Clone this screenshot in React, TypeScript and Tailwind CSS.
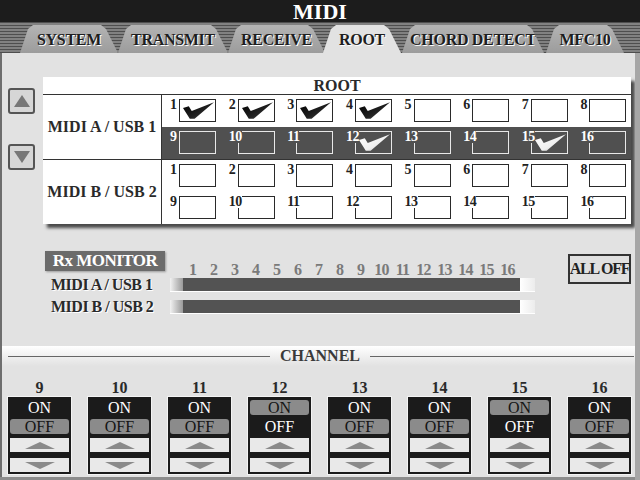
import React from 'react'

const tabs = [
  { label: 'SYSTEM', cls: 'w-[98px]' },
  { label: 'TRANSMIT', cls: 'w-[110px]' },
  { label: 'RECEIVE', cls: 'w-[97px]' },
  { label: 'ROOT', cls: 'w-[78px] ml-[-2px]', active: true },
  { label: 'CHORD DETECT', cls: 'w-[142px] ml-[1px]' },
  { label: 'MFC10', cls: 'w-[78px] ml-[2px]' },
]

const checkedA = [1, 2, 3, 4, 12, 15]
const channels = [9, 10, 11, 12, 13, 14, 15, 16]
const onChannels = [12, 15]

function Check({ light }: { light?: boolean }) {
  return (
    <svg viewBox="0 0 32 17" className="absolute left-[3px] top-[2px] w-[31px] h-[17px]">
      <defs>
        <linearGradient id={light ? 'cl' : 'cd'} x1="0" y1="0" x2="1" y2="1">
          <stop offset="0" stopColor={light ? '#ffffff' : '#000000'} />
          <stop offset="0.6" stopColor={light ? '#f0f0f0' : '#222222'} />
          <stop offset="1" stopColor={light ? '#a8a8a8' : '#666666'} />
        </linearGradient>
      </defs>
      <polygon points="0,6 6,4 9,9 32,0 12,17 7,17" fill={`url(#${light ? 'cl' : 'cd'})`} />
    </svg>
  )
}

function CellRow({ start, dark, checked }: { start: number; dark?: boolean; checked: number[] }) {
  return (
    <div className={`h-[32px] grid grid-cols-8 ${dark ? 'bg-[#505050]' : 'bg-white'}`}>
      {Array.from({ length: 8 }, (_, i) => start + i).map((n) => (
        <div key={n} className="relative pt-[4px] pl-[17px]">
          <span
            className={`absolute left-[8px] top-[3px] z-10 text-[14px] leading-[13px] font-bold tracking-[-0.5px] ${
              dark ? 'bg-[#505050] text-white' : 'bg-white text-[#222]'
            }`}
          >
            {n}
          </span>
          <div className={`relative w-[37px] h-[23px] border ${dark ? 'border-[#e8e8e8]' : 'border-[#2a2a2a]'}`}>
            {checked.includes(n) && <Check light={dark} />}
          </div>
        </div>
      ))}
    </div>
  )
}

function ArrowButton({ down }: { down?: boolean }) {
  return (
    <div className="w-[27px] h-[26px] rounded-[3px] border-2 border-[#555] bg-[#d6d6d6] flex items-center justify-center">
      <svg viewBox="0 0 16 14" className="w-[16px] h-[14px]">
        <polygon points={down ? '0,1 16,1 8,13' : '8,1 16,13 0,13'} fill="#777" />
      </svg>
    </div>
  )
}

function Bar() {
  return (
    <div className="flex h-[14px] border-b border-white">
      <div className="w-[13px] bg-gradient-to-r from-[#f2f2f2] to-[#9a9a9a]" />
      <div className="flex-1 bg-[#535353]" />
      <div className="w-[15px] bg-gradient-to-r from-white to-[#ececec]" />
    </div>
  )
}

function Strip({ n }: { n: number }) {
  const on = onChannels.includes(n)
  return (
    <div className="flex flex-col items-center w-[63px]">
      <div className="h-[18px] text-[16px] leading-[18px] font-bold text-[#2a2a2a]">{n}</div>
      <div className="w-[63px] h-[77px] bg-[#1b1b1b] ring-1 ring-[#f4f4f4] flex flex-col px-[2px] pt-[3px]">
        <div
          className={`h-[15px] rounded-[3px] flex items-center justify-center text-[16px] leading-none ${
            on ? 'bg-[#8b8b8b] text-[#151515]' : 'text-white'
          }`}
        >
          ON
        </div>
        <div
          className={`mt-[4px] h-[15px] rounded-[3px] flex items-center justify-center text-[16px] leading-none ${
            on ? 'text-white' : 'bg-[#8b8b8b] text-[#151515]'
          }`}
        >
          OFF
        </div>
        <div className="mt-[4px] h-[14px] bg-[#e9e9e9] flex items-center justify-center">
          <svg viewBox="0 0 30 7" className="w-[30px] h-[7px]">
            <polygon points="15,0 30,7 0,7" fill="#8a8a8a" />
          </svg>
        </div>
        <div className="mt-[6px] h-[14px] bg-[#e9e9e9] flex items-center justify-center">
          <svg viewBox="0 0 30 7" className="w-[30px] h-[7px]">
            <polygon points="0,0 30,0 15,7" fill="#8a8a8a" />
          </svg>
        </div>
      </div>
    </div>
  )
}

export default function App() {
  return (
    <div className="w-[640px] h-[480px] overflow-hidden flex flex-col bg-[#8c8c8c] font-['Liberation_Serif','Times_New_Roman',serif]">
      <div className="h-[22px] bg-[#1c1c1c] flex items-center justify-center pt-[1px] text-white text-[22px] leading-[20px] font-bold">
        MIDI
      </div>

      <div className="h-[31px] flex items-end pl-[20px] bg-[repeating-linear-gradient(180deg,#4e4e4e_0px,#4e4e4e_1px,#818181_1px,#818181_3px)]">
        {tabs.map((t) => (
          <div
            key={t.label}
            className={`${t.cls} relative h-[28px] flex items-center justify-center pt-[2px] text-[16px] font-bold text-[#1e1e1e] tracking-[-0.3px] [text-shadow:1px_1px_0_#fff] [clip-path:polygon(0_100%,8px_4px,13px_0,calc(100%_-_17px)_0,calc(100%_-_12px)_4px,100%_100%)] ${
              t.active ? 'bg-[#e2e2e2] z-10' : 'bg-gradient-to-b from-[#b4b4b4] to-[#9c9c9c]'
            }`}
          >
            {t.label}
          </div>
        ))}
      </div>

      <div className="flex-1 flex">
        <div className="w-[635px] h-[424px] bg-[#e2e2e2] border-l-2 border-[#6e6e6e] flex flex-col">
          {/* ROOT table */}
          <div className="flex mt-[24px]">
            <div className="w-[41px] pl-[6px] flex flex-col">
              <div className="mt-[11px]">
                <ArrowButton />
              </div>
              <div className="mt-[30px]">
                <ArrowButton down />
              </div>
            </div>
            <div className="w-[588px] h-[147px] bg-white shadow-[4px_4px_3px_#4a4a4a] flex flex-col text-[#2a2a2a]">
              <div className="h-[18px] border-b border-[#333] text-center text-[16px] leading-[17px] font-bold">ROOT</div>
              <div className="flex h-[65px] border-b border-[#333]">
                <div className="w-[119px] border-r border-[#333] flex items-center justify-center text-[16px] font-bold">
                  MIDI A / USB 1
                </div>
                <div className="flex-1 flex flex-col">
                  <CellRow start={1} checked={checkedA} />
                  <CellRow start={9} dark checked={checkedA} />
                </div>
              </div>
              <div className="flex h-[64px]">
                <div className="w-[119px] border-r border-[#333] flex items-center justify-center text-[16px] font-bold">
                  MIDI B / USB 2
                </div>
                <div className="flex-1 flex flex-col">
                  <CellRow start={1} checked={[]} />
                  <CellRow start={9} checked={[]} />
                </div>
              </div>
            </div>
          </div>

          {/* Rx monitor */}
          <div className="flex mt-[27px] pl-[43px]">
            <div className="w-[125px] flex flex-col">
              <div className="w-[120px] h-[20px] bg-[#6b6b6b] shadow-[1px_1px_2px_#999] text-white text-[17px] leading-[20px] font-bold text-center tracking-[-0.5px]">
                Rx MONITOR
              </div>
              <div className="mt-[3px] h-[22px] pl-[6px] leading-[22px] text-[16px] font-bold text-[#2a2a2a] tracking-[-0.5px] [text-shadow:1px_1px_0_#fff]">
                MIDI A / USB 1
              </div>
              <div className="h-[22px] pl-[6px] leading-[22px] text-[16px] font-bold text-[#2a2a2a] tracking-[-0.5px] [text-shadow:1px_1px_0_#fff]">
                MIDI B / USB 2
              </div>
            </div>
            <div className="w-[365px] flex flex-col">
              <div className="h-[27px] flex items-end pl-[12px] pb-[1px]">
                {Array.from({ length: 16 }, (_, i) => i + 1).map((n) => (
                  <span key={n} className="w-[21px] text-center text-[16px] leading-[14px] font-bold text-[#7a7a7a] tracking-[-0.8px]">
                    {n}
                  </span>
                ))}
              </div>
              <Bar />
              <div className="mt-[8px]">
                <Bar />
              </div>
            </div>
            <div className="ml-[33px] mt-[3px] w-[63px] h-[30px] border-2 border-[#333] bg-[#e0e0e0] flex items-center justify-center text-[16px] font-bold tracking-[-1.2px] text-[#222] whitespace-nowrap">
              ALL OFF
            </div>
          </div>

          {/* CHANNEL heading */}
          <div className="mt-[28px] h-[20px] bg-gradient-to-b from-white to-[#e2e2e2] flex items-center pl-[6px] pr-[1px]">
            <div className="w-[262px] h-px bg-[#666]" />
            <div className="px-[10px] text-[16px] leading-none font-bold text-[#3a3a3a]">CHANNEL</div>
            <div className="flex-1 h-px bg-[#666]" />
          </div>

          <div className="mt-[13px] flex pl-[6px] gap-[17px]">
            {channels.map((n) => (
              <Strip key={n} n={n} />
            ))}
          </div>
        </div>
        <div className="flex-1 bg-[#a6a6a6]" />
      </div>
    </div>
  )
}
